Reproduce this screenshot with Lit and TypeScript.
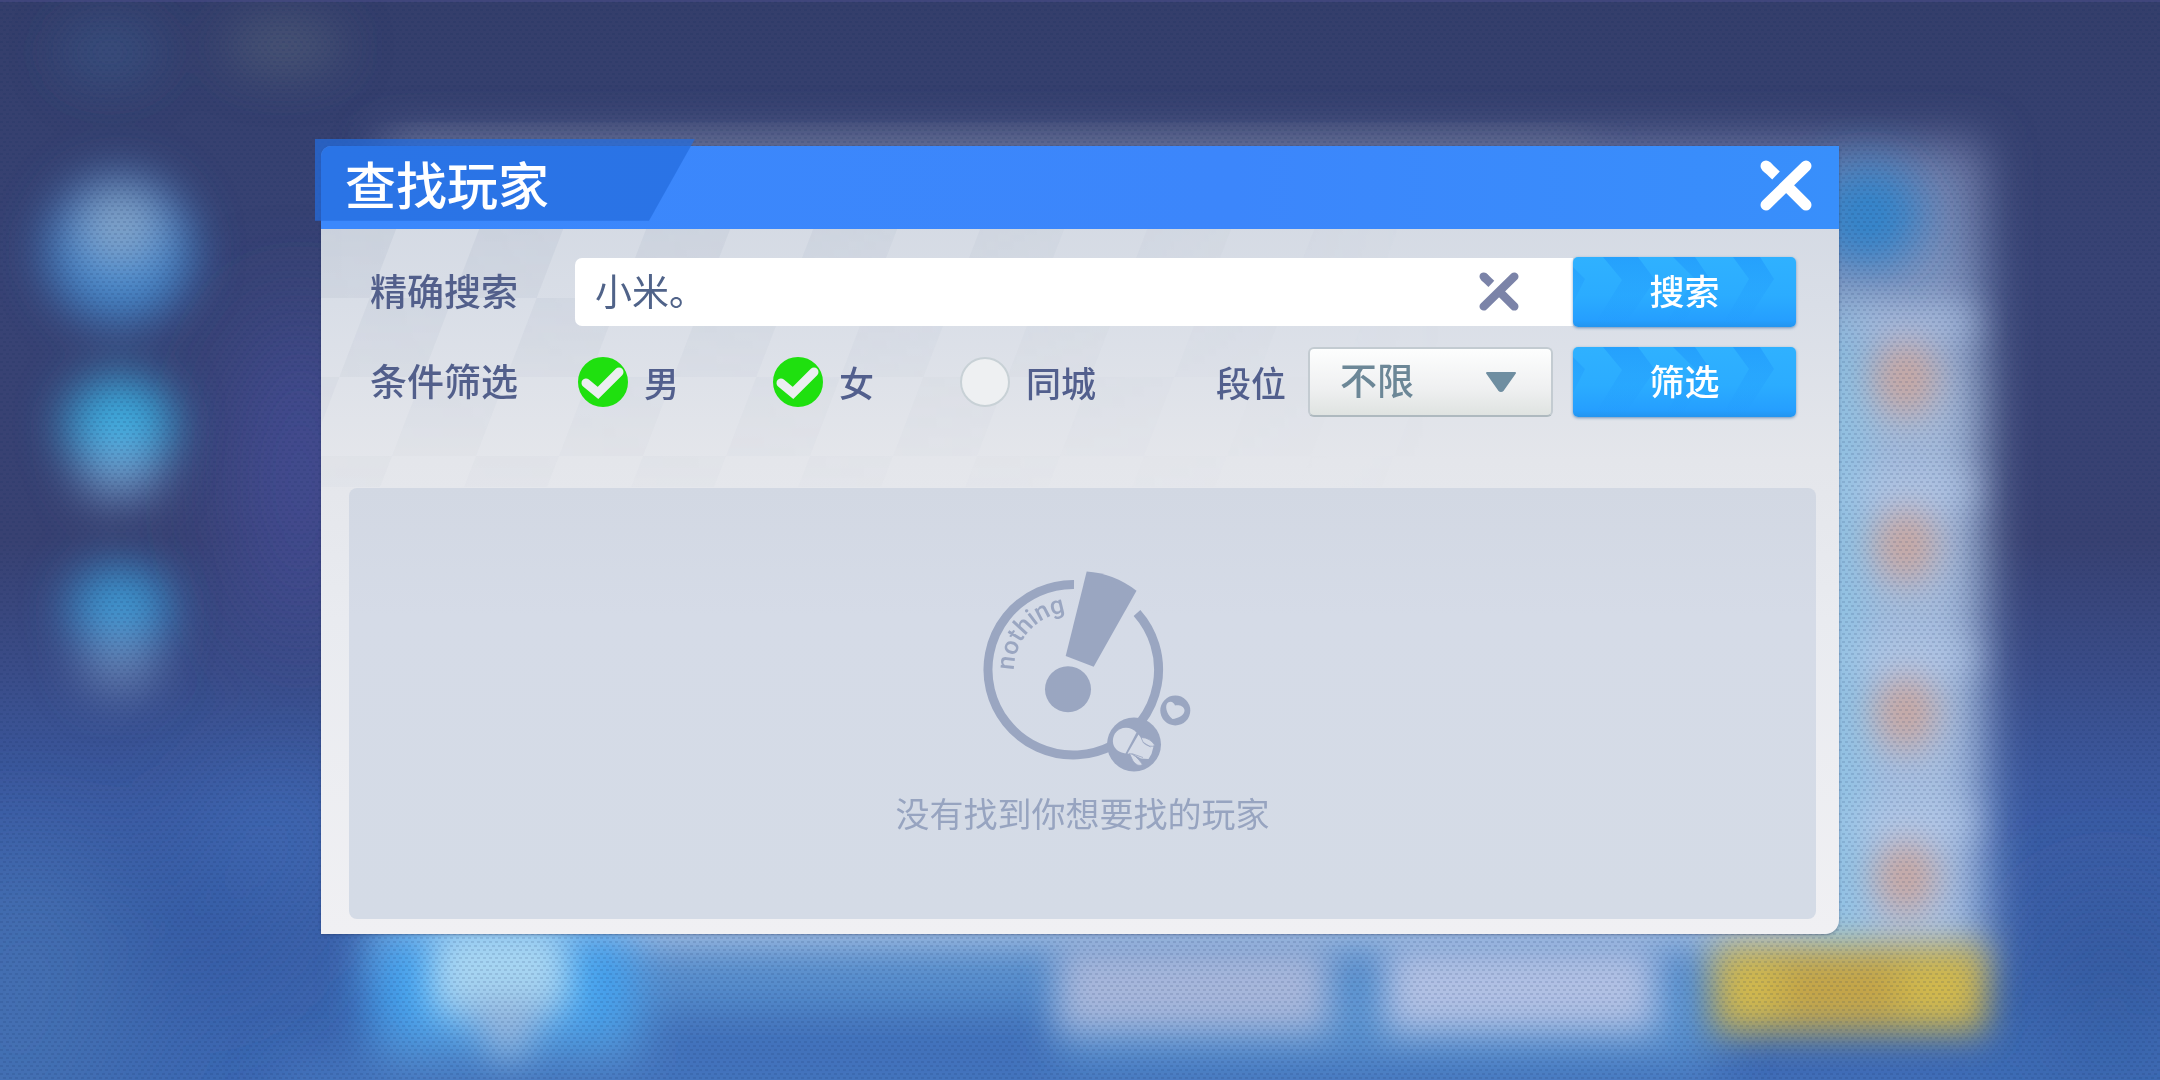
import { LitElement, html, css, svg } from "lit";
import { customElement, property, state } from "lit/decorators.js";

const FONT = css`"Noto Sans CJK SC", "Noto Sans", sans-serif`;

const crossIcon = svg`
  <g stroke="currentColor" fill="none" stroke-width="11">
    <path d="M6 45 46 6M29 28 46 45" stroke-linecap="round" />
    <path d="M6 6 8 8" stroke-linecap="round" />
    <path d="M6 6 16 15.500" />
  </g>`;

/** Blurred lobby scene behind the dialog. */
@customElement("lobby-backdrop")
export class LobbyBackdrop extends LitElement {
  static styles = css`
    :host { display: block; }
    .scene { display: block; width: 100%; height: 100%; }
  `;

  render() {
    const friends = [378, 545, 712, 877];
    return html`
      <svg class="scene" viewBox="0 0 2160 1080" preserveAspectRatio="xMidYMid slice" aria-hidden="true">
        <defs>
          <linearGradient id="sky" x1="0" y1="0" x2="0" y2="1">
            <stop offset="0" stop-color="#343e6b" />
            <stop offset=".25" stop-color="#384375" />
            <stop offset=".5" stop-color="#384172" />
            <stop offset=".62" stop-color="#3a4c88" />
            <stop offset=".75" stop-color="#3b5ba3" />
            <stop offset="1" stop-color="#3d69b3" />
          </linearGradient>
          <linearGradient id="strip" x1="0" y1="0" x2="0" y2="1">
            <stop offset="0" stop-color="#6e78a4" />
            <stop offset=".15" stop-color="#7c90bb" />
            <stop offset=".3" stop-color="#a3b8d8" />
            <stop offset="1" stop-color="#a9c2e4" />
          </linearGradient>
          <filter id="b14" x="-60%" y="-60%" width="220%" height="220%"><feGaussianBlur stdDeviation="17" /></filter>
          <filter id="b20" x="-60%" y="-60%" width="220%" height="220%"><feGaussianBlur stdDeviation="24" /></filter>
          <filter id="b50" x="-80%" y="-80%" width="260%" height="260%"><feGaussianBlur stdDeviation="50" /></filter>
          <pattern id="dots" width="6" height="8" patternUnits="userSpaceOnUse">
            <rect x="0" y="1" width="3" height="2" fill="#14285a" />
            <rect x="3" y="5" width="3" height="2" fill="#14285a" />
          </pattern>
        </defs>
        <rect width="2160" height="1080" fill="url(#sky)" />
        <g filter="url(#b50)">
          <ellipse cx="300" cy="480" rx="70" ry="170" fill="#45509c" opacity=".75" />
          <ellipse cx="20" cy="1000" rx="110" ry="160" fill="#4674b4" opacity=".7" />
          <ellipse cx="200" cy="920" rx="90" ry="70" fill="#355aa4" opacity=".8" />
          <ellipse cx="280" cy="830" rx="70" ry="60" fill="#456fbc" opacity=".7" />
          <ellipse cx="2110" cy="1010" rx="90" ry="120" fill="#34589d" opacity=".8" />
          <ellipse cx="1800" cy="1070" rx="900" ry="40" fill="#4273bd" opacity=".7" />
        </g>
        <g filter="url(#b20)">
          <ellipse cx="110" cy="52" rx="52" ry="34" fill="#3b5a88" opacity=".55" />
          <ellipse cx="284" cy="46" rx="60" ry="28" fill="#54617a" opacity=".65" />
          <ellipse cx="120" cy="250" rx="72" ry="72" fill="#4489cc" />
          <ellipse cx="120" cy="226" rx="40" ry="36" fill="#86a6c8" />
          <ellipse cx="120" cy="426" rx="54" ry="48" fill="#3aade0" />
          <ellipse cx="120" cy="474" rx="40" ry="24" fill="#749dcb" />
          <ellipse cx="120" cy="608" rx="50" ry="40" fill="#3a9ad4" />
          <ellipse cx="120" cy="662" rx="38" ry="30" fill="#6683b4" />
        </g>
        <rect x="384" y="142" width="1600" height="830" fill="url(#strip)" filter="url(#b20)" />
        <rect x="390" y="140" width="1200" height="30" fill="#6f7892" opacity=".6" filter="url(#b20)" />
        <g filter="url(#b20)">
          <ellipse cx="1868" cy="215" rx="54" ry="52" fill="#3384cb" />
          <rect x="1820" y="310" width="38" height="640" fill="#85c4e6" />
          <rect x="380" y="950" width="1340" height="150" fill="#5a93d0" />
          <rect x="640" y="1005" width="420" height="100" fill="#3f6fba" />
          <rect x="370" y="930" width="262" height="106" fill="#45a3ee" />
          <rect x="280" y="1060" width="1440" height="60" fill="#4474bd" />
        </g>
        <g filter="url(#b14)">
          ${friends.map(
            (y) => svg`
              <rect x="1850" y=${y - 66} width="124" height="22" fill="#b9cfee" opacity=".7" />
              <ellipse cx="1906" cy=${y} rx="30" ry="38" fill="#c8a7a2" />`
          )}
          <rect x="430" y="925" width="140" height="96" rx="30" fill="#a6d4f2" />
          <path d="M450 1000h110l-50 66z" fill="#93b4dc" />
          <rect x="1058" y="946" width="270" height="86" fill="#a6b6da" />
          <rect x="1386" y="946" width="270" height="86" fill="#b0c0e3" />
          <rect x="1714" y="946" width="272" height="86" fill="#d0b84e" />
          <rect x="1780" y="960" width="120" height="60" fill="#bf9f48" opacity=".8" />
        </g>
        <rect width="2160" height="1080" fill="url(#dots)" opacity=".12" />
        <rect width="2160" height="2" fill="#4b4d8c" opacity=".5" />
      </svg>`;
  }
}

/** Blue chevron button. */
@customElement("action-button")
export class ActionButton extends LitElement {
  @property() label = "";

  static styles = css`
    :host { display: block; }
    .button {
      position: relative;
      width: 100%;
      height: 70px;
      padding: 0 0 4px;
      border: 0;
      border-radius: 5px;
      overflow: hidden;
      background: linear-gradient(#2fb1ff, #2bacff 55%, #259fff 90%, #2295f0);
      box-shadow: 0 1px 3px rgba(40, 100, 160, 0.6);
      color: #fff;
      font: 500 35px/50px ${FONT};
      cursor: pointer;
    }
    .chevrons { position: absolute; inset: 0; width: 100%; height: 100%; }
    .text { position: relative; }
  `;

  render() {
    return html`
      <button class="button" type="button">
        <svg class="chevrons" viewBox="0 0 223 70" preserveAspectRatio="none" aria-hidden="true">
          <defs>
            <linearGradient id="fade" x1="0" y1="0" x2="0" y2="70" gradientUnits="userSpaceOnUse">
              <stop offset="0" stop-color="#1e96fb" stop-opacity=".6" />
              <stop offset=".4" stop-color="#1e96fb" stop-opacity=".3" />
              <stop offset="1" stop-color="#1e96fb" stop-opacity="0" />
            </linearGradient>
          </defs>
          <g fill="url(#fade)">
            <path d="M0 10 12 22 0 46zM30 0H65L82 23 50 70H20L49 23zM100 0H122L137 22 108 70H90L122 22zM160 0H187L201 22 170 70H148L176 22z" />
          </g>
        </svg>
        <span class="text">${this.label}</span>
      </button>`;
  }
}

/** Round tick box with its caption. */
@customElement("round-check")
export class RoundCheck extends LitElement {
  @property() label = "";
  @property({ type: Boolean }) checked = false;

  static styles = css`
    :host { display: block; }
    .option { display: flex; align-items: center; gap: 16px; cursor: pointer; }
    .mark { display: grid; place-items: center; }
    .box, .tick { grid-area: 1 / 1; }
    .box {
      appearance: none;
      box-sizing: border-box;
      width: 50px;
      height: 50px;
      margin: 0;
      border: 2px solid #c8d1d6;
      border-radius: 50%;
      background: #eef0f2;
    }
    .box:checked { border-color: #1fe00f; background: #1fe00f; }
    .tick { width: 50px; height: 50px; pointer-events: none; }
    .caption { color: #525f8d; font: 500 35px/50px ${FONT}; }
  `;

  private toggle(e: Event) {
    this.checked = (e.target as HTMLInputElement).checked;
  }

  render() {
    return html`
      <label class="option">
        <span class="mark">
          <input class="box" type="checkbox" .checked=${this.checked} @change=${this.toggle} />
          ${this.checked
            ? html`<svg class="tick" viewBox="0 0 50 50" aria-hidden="true">
                <path d="M8 26 20 36 41 15" fill="none" stroke="#ebeef0" stroke-width="9" stroke-linecap="round" />
              </svg>`
            : null}
        </span>
        <span class="caption">${this.label}</span>
      </label>`;
  }
}

/** Illustration and message for a search without results. */
@customElement("empty-result")
export class EmptyResult extends LitElement {
  static styles = css`
    :host {
      display: flex;
      flex-direction: column;
      align-items: center;
      justify-content: center;
      gap: 8px;
      box-sizing: border-box;
      padding-bottom: 4px;
      border-radius: 8px;
      background: linear-gradient(#d2d8e3, #d5dbe7 30%, #d4dbe6);
    }
    .art { width: 220px; height: 215px; }
    .word { font: 500 25px Roboto, "Liberation Sans", sans-serif; }
    .message { margin: 0; color: #97a4c0; font: 400 34px/48px ${FONT}; }
  `;

  render() {
    return html`
      <svg class="art" viewBox="13 16 220 215" aria-hidden="true">
        <defs><path id="arc" d="M54 120.500A58.500 58.500 0 0 1 112.500 62" /></defs>
        <path d="M177 63A85.3 85.3 0 1 1 114 34.4" fill="none" stroke="#9aa6c1" stroke-width="9" />
        <path d="M126.7 21.5Q153 23 176.5 40.7L133.7 116.7 105.7 106z" fill="#9aa6c1" />
        <circle cx="108" cy="139.3" r="23" fill="#9aa6c1" />
        <text class="word" fill="#9aa6c1"><textPath href="#arc">nothing</textPath></text>
        <circle cx="174" cy="194.5" r="27" fill="#9aa6c1" />
        <path d="M176.500 182.500C171 176 160 176 155 183.500C150 192 154 202 165.500 203.500Z" fill="#d5dbe7" />
        <path d="M178.500 184.500 183 190.500 191 194 193.500 196.500 191.500 204 188.500 209 181 208.500 173.500 204.500 167.500 203.500Z" fill="#d5dbe7" />
        <path d="M181 187.500Q190 187.500 195 195.500Q190 198 183.500 193Z" fill="#d5dbe7" stroke="#9aa6c1" stroke-width=".8" />
        <path d="M169.500 203.500Q175 204 182.500 214.500Q178 217.500 173 211Z" fill="#d5dbe7" stroke="#9aa6c1" stroke-width=".8" />
        <path d="M171.500 203.500 183 207.500M183.500 192.500 190.500 197" fill="none" stroke="#9aa6c1" stroke-width=".8" />
        <circle cx="215.300" cy="160.500" r="15" fill="#9aa6c1" />
        <path d="M212.500 169C206 164 204.500 155 208 152.500C211.500 150.500 214 153 215 155.500C218 154.500 224 155.500 224.500 160C225 165 218 168.500 212.500 169Z" fill="#d5dbe7" />
      </svg>
      <p class="message">没有找到你想要找的玩家</p>`;
  }
}

@customElement("app-root")
export class AppRoot extends LitElement {
  @state() private query = "小米。";

  static styles = css`
    :host { display: block; }
    .page {
      position: relative;
      display: grid;
      align-items: center;
      min-height: 100vh;
      box-sizing: border-box;
      padding: 40px 321px;
      overflow: hidden;
      font-family: ${FONT};
    }
    .backdrop { position: absolute; inset: 0; }
    .dialog {
      position: relative;
      display: flex;
      flex-direction: column;
      min-height: 73vh;
      border-radius: 10px 0 14px 0;
      background: linear-gradient(#d1d7e1, #d9dee7 20%, #e4e6eb 40%, #e9ebf0 60%, #f0f0f3);
      box-shadow: 0 1px 3px rgba(30, 40, 80, 0.4);
    }
    .header {
      position: relative;
      display: flex;
      align-items: center;
      justify-content: space-between;
      height: 83px;
      padding: 0 27px 0 24px;
      border-radius: 10px 0 0 0;
      background: linear-gradient(90deg, #3b88fc, #3c86fb 60%, #388ffb);
    }
    .ribbon {
      position: absolute;
      left: -6px;
      top: -7px;
      width: 380px;
      height: 82px;
      background: rgba(36, 108, 222, 0.72);
      clip-path: polygon(0 0, 100% 0, 334px 100%, 0 100%);
    }
    .title {
      position: relative;
      margin: 0;
      padding-bottom: 8px;
      color: #fff;
      font: 500 51px/72px ${FONT};
    }
    .icon-button { padding: 0; border: 0; background: none; display: flex; cursor: pointer; }
    .close { color: #fff; padding-bottom: 4px; }
    .close-icon { width: 52px; height: 51px; }
    .body {
      position: relative;
      flex: 1;
      display: flex;
      flex-direction: column;
      gap: 71px;
      padding: 28px 23px 15px 28px;
    }
    .weave { position: absolute; left: 0; top: 0; width: 100%; height: 258px; }
    .form {
      position: relative;
      display: grid;
      grid-template-columns: 205px 1fr 223px;
      row-gap: 20px;
      align-items: center;
      padding: 0 20px 0 21px;
    }
    .label {
      padding-bottom: 4px;
      color: #525f8b;
      font: 500 37px/54px ${FONT};
    }
    .field {
      display: flex;
      align-items: center;
      height: 68px;
      padding: 0 54px 0 20px;
      border-radius: 7px 0 0 7px;
      background: #fff;
    }
    .input {
      flex: 1;
      min-width: 0;
      padding: 0 0 4px;
      border: 0;
      outline: 0;
      background: none;
      color: #506389;
      font: 400 37px/54px ${FONT};
    }
    .clear { color: #7b83a8; }
    .clear-icon { width: 40px; height: 39px; }
    .filters { display: flex; align-items: center; justify-content: space-between; padding: 0 20px 0 3px; }
    .checks { display: grid; grid-template-columns: 195px 187px auto; }
    .rank { display: flex; align-items: center; gap: 22px; }
    .rank-label { color: #525f8d; font: 500 35px/50px ${FONT}; }
    .select-wrap { display: grid; align-items: center; width: 245px; }
    .select, .arrow { grid-area: 1 / 1; }
    .select {
      appearance: none;
      box-sizing: border-box;
      width: 100%;
      height: 70px;
      padding: 0 60px 6px 30px;
      border: 2px solid #c3cbd1;
      border-bottom-color: #aeb9bf;
      border-radius: 6px;
      background: linear-gradient(#fdfefe, #eff0f1 60%, #dfe3e1);
      color: #6c8797;
      font: 500 37px/54px ${FONT};
    }
    .arrow { justify-self: end; width: 34px; height: 22px; margin-right: 35px; pointer-events: none; }
    .results { position: relative; flex: 1; }
  `;

  private onInput(e: Event) {
    this.query = (e.target as HTMLInputElement).value;
  }

  private clear() {
    this.query = "";
  }

  render() {
    return html`
      <div class="page">
        <lobby-backdrop class="backdrop"></lobby-backdrop>
        <section class="dialog" role="dialog" aria-labelledby="title">
          <header class="header">
            <div class="ribbon"></div>
            <h1 class="title" id="title">查找玩家</h1>
            <button class="icon-button close" type="button" aria-label="关闭">
              <svg class="close-icon" viewBox="0 0 52 51">${crossIcon}</svg>
            </button>
          </header>
          <div class="body">
            <svg class="weave" viewBox="0 0 1518 258" preserveAspectRatio="xMinYMin slice" aria-hidden="true">
              <defs>
                <pattern id="cells" width="167" height="158" patternUnits="userSpaceOnUse" patternTransform="translate(-5 -10) skewX(-21)">
                  <rect width="84" height="79" fill="#8f9db5" />
                  <rect x="84" y="79" width="83" height="79" fill="#8f9db5" />
                </pattern>
                <linearGradient id="right" x1="0" y1="0" x2="1" y2="0">
                  <stop offset="0" stop-color="#fff" />
                  <stop offset=".3" stop-color="#fff" stop-opacity=".7" />
                  <stop offset=".75" stop-color="#fff" stop-opacity="0" />
                </linearGradient>
                <linearGradient id="down" x1="0" y1="0" x2="0" y2="1">
                  <stop offset="0" stop-color="#fff" stop-opacity=".15" />
                  <stop offset=".6" stop-color="#fff" stop-opacity=".07" />
                  <stop offset="1" stop-color="#fff" stop-opacity=".03" />
                </linearGradient>
                <mask id="maskRight"><rect width="1518" height="258" fill="url(#right)" /></mask>
                <mask id="maskDown"><rect width="1518" height="258" fill="url(#down)" /></mask>
              </defs>
              <g mask="url(#maskDown)"><rect width="1518" height="258" fill="url(#cells)" mask="url(#maskRight)" /></g>
            </svg>
            <form class="form" @submit=${(e: Event) => e.preventDefault()}>
              <label class="label" for="query">精确搜索</label>
              <div class="field">
                <input class="input" id="query" type="text" .value=${this.query} @input=${this.onInput} />
                <button class="icon-button clear" type="button" aria-label="清除" @click=${this.clear}>
                  <svg class="clear-icon" viewBox="0 0 52 51">${crossIcon}</svg>
                </button>
              </div>
              <action-button label="搜索"></action-button>
              <span class="label" id="filters">条件筛选</span>
              <div class="filters" role="group" aria-labelledby="filters">
                <div class="checks">
                  <round-check label="男" checked></round-check>
                  <round-check label="女" checked></round-check>
                  <round-check label="同城"></round-check>
                </div>
                <div class="rank">
                  <label class="rank-label" for="rank">段位</label>
                  <div class="select-wrap">
                    <select class="select" id="rank"><option>不限</option></select>
                    <svg class="arrow" viewBox="0 0 34 22" aria-hidden="true">
                      <path d="M3 2H31L19 19Q17 21 15 19Z" fill="#6f8ea1" stroke="#6f8ea1" stroke-width="2" stroke-linejoin="round" />
                    </svg>
                  </div>
                </div>
              </div>
              <action-button label="筛选"></action-button>
            </form>
            <empty-result class="results"></empty-result>
          </div>
        </section>
      </div>`;
  }
}
